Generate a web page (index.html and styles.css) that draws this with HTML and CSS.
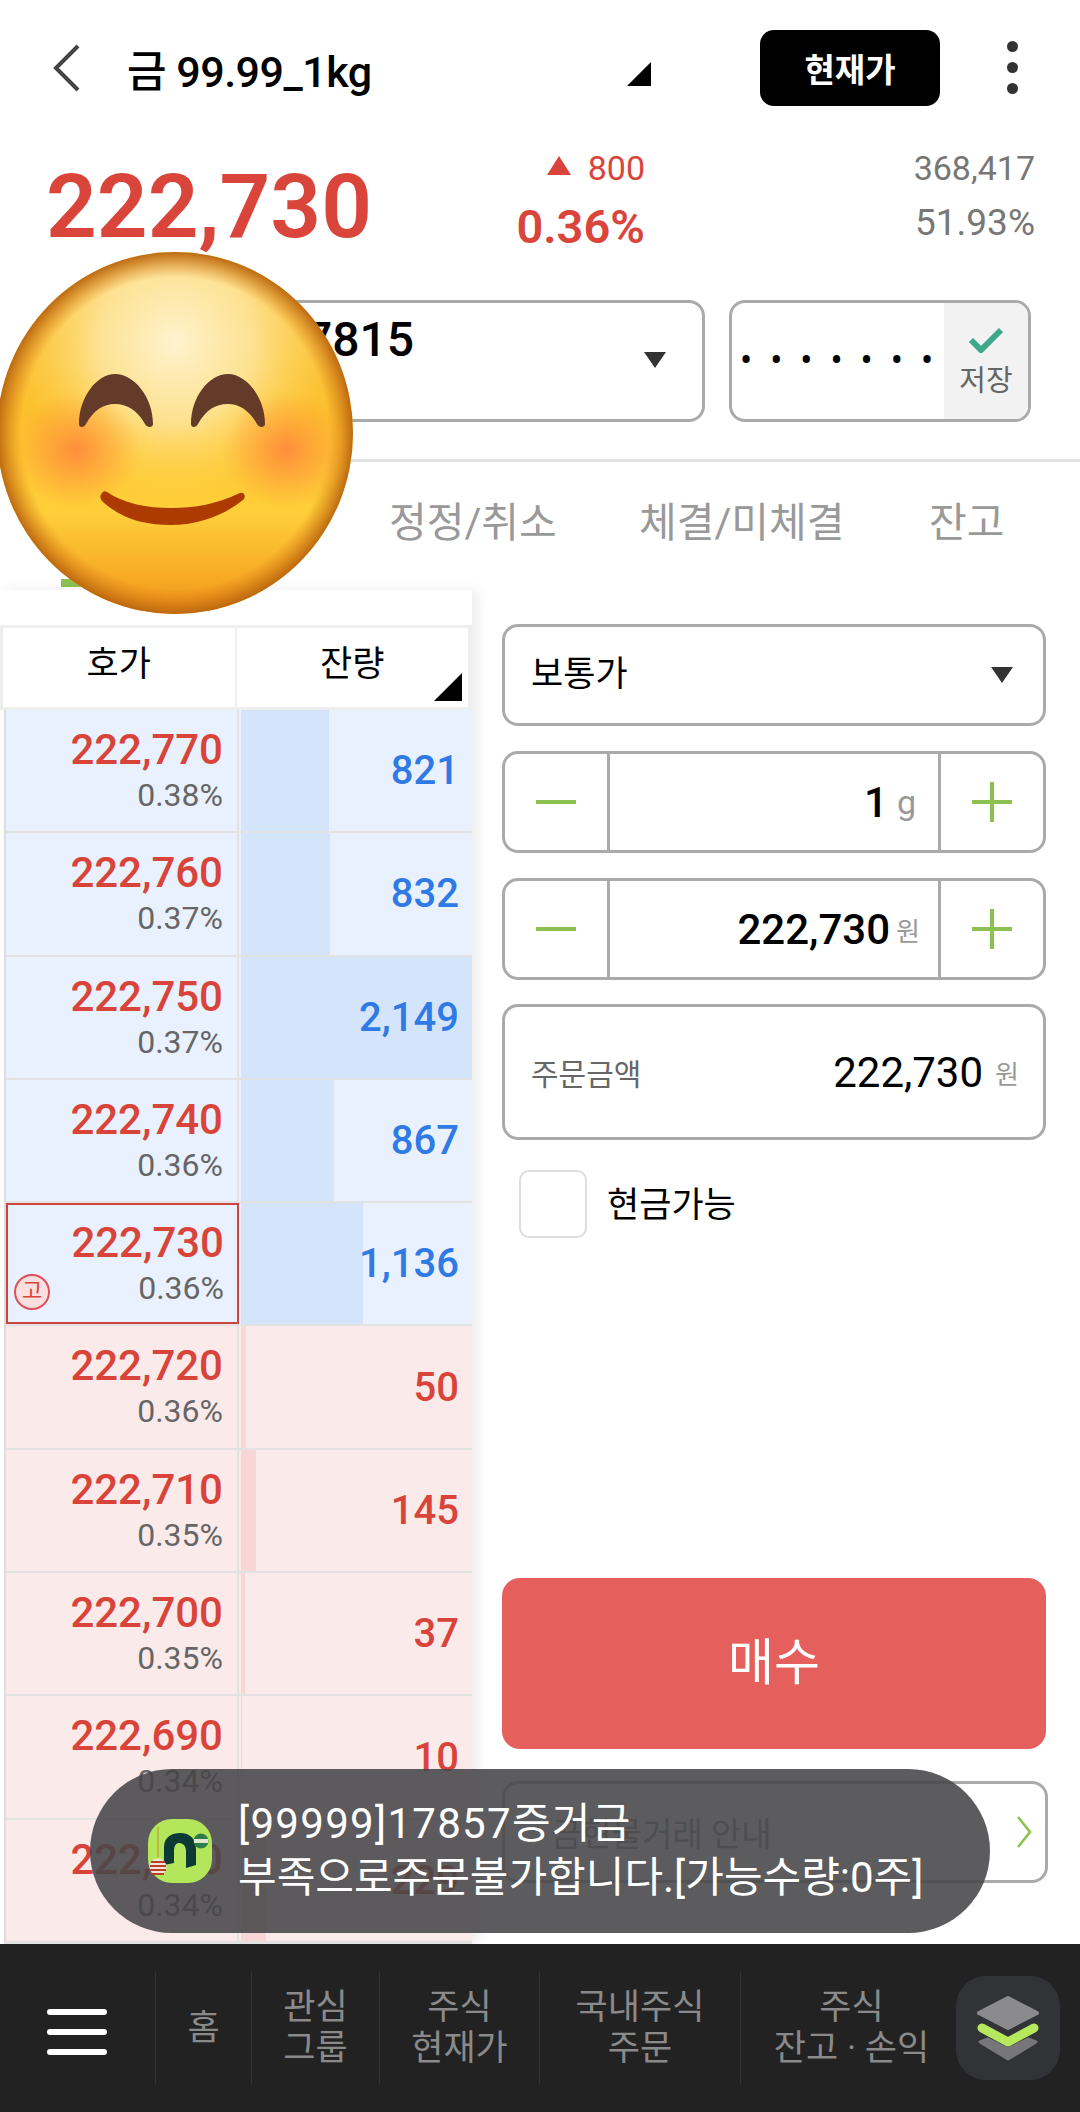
FILE: index.html
```html
<!DOCTYPE html>
<html lang="ko">
<head>
  <meta charset="UTF-8" />
  <meta name="viewport" content="width=device-width, initial-scale=1.0" />
  <title>금 99.99_1kg</title>
  <link rel="stylesheet" href="styles.css">
</head>
<body>
<div class="app">

  <div class="topbar">
    <svg class="back" width="30" height="48" viewBox="0 0 30 48"><path d="M28 2 L6 24 L28 46" fill="none" stroke="#444" stroke-width="4"/></svg>
    <div class="title">금 99.99_1kg</div>
    <div class="corner title-corner"></div>
    <button class="now-btn">현재가</button>
    <div class="more"><i></i><i></i><i></i></div>
  </div>

  <div class="price-row">
    <div class="price">222,730</div>
    <div class="change">
      <div class="change-abs"><span class="up"></span>800</div>
      <div class="change-pct">0.36%</div>
    </div>
    <div class="volume">
      <div>368,417</div>
      <div class="volume-pct">51.93%</div>
    </div>
  </div>

  <div class="account-row">
    <div class="account">
      <span class="account-no">7815</span>
      <span class="caret"></span>
    </div>
    <div class="password">
      <span class="pw-dots">•••••••</span>
      <div class="save">
        <svg width="36" height="26" viewBox="0 0 36 26"><path d="M3 13 L13 23 L33 3" fill="none" stroke="#3ea88a" stroke-width="6"/></svg>
        <span>저장</span>
      </div>
    </div>
  </div>

  <div class="tabs">
    <div class="tab active">주문</div>
    <div class="tab">정정/취소</div>
    <div class="tab">체결/미체결</div>
    <div class="tab">잔고</div>
  </div>

  <div class="trade">
    <div class="book">
      <div class="book-head">
        <div class="head-cell">호가</div>
        <div class="head-cell">잔량<div class="corner book-corner"></div></div>
      </div>
      <div class="rows">
        <div class="row sell">
          <div class="quote"><b>222,770</b><span>0.38%</span></div>
          <div class="qty"><div class="bar" style="width:38.2%"></div><b>821</b></div>
        </div>
        <div class="row sell">
          <div class="quote"><b>222,760</b><span>0.37%</span></div>
          <div class="qty"><div class="bar" style="width:38.7%"></div><b>832</b></div>
        </div>
        <div class="row sell">
          <div class="quote"><b>222,750</b><span>0.37%</span></div>
          <div class="qty"><div class="bar" style="width:100%"></div><b>2,149</b></div>
        </div>
        <div class="row sell">
          <div class="quote"><b>222,740</b><span>0.36%</span></div>
          <div class="qty"><div class="bar" style="width:40.3%"></div><b>867</b></div>
        </div>
        <div class="row sell">
          <div class="quote current"><b>222,730</b><span>0.36%</span><em class="high">고</em></div>
          <div class="qty"><div class="bar" style="width:52.9%"></div><b>1,136</b></div>
        </div>
        <div class="row buy">
          <div class="quote"><b>222,720</b><span>0.36%</span></div>
          <div class="qty"><div class="bar" style="width:2.3%"></div><b>50</b></div>
        </div>
        <div class="row buy">
          <div class="quote"><b>222,710</b><span>0.35%</span></div>
          <div class="qty"><div class="bar" style="width:6.7%"></div><b>145</b></div>
        </div>
        <div class="row buy">
          <div class="quote"><b>222,700</b><span>0.35%</span></div>
          <div class="qty"><div class="bar" style="width:1.7%"></div><b>37</b></div>
        </div>
        <div class="row buy">
          <div class="quote"><b>222,690</b><span>0.34%</span></div>
          <div class="qty"><div class="bar" style="width:0.5%"></div><b>10</b></div>
        </div>
        <div class="row buy">
          <div class="quote"><b>222,680</b><span>0.34%</span></div>
          <div class="qty"><div class="bar" style="width:10.7%"></div><b>229</b></div>
        </div>
      </div>
    </div>

    <div class="form">
      <div class="box order-type">
        <span>보통가</span>
        <span class="caret"></span>
      </div>
      <div class="box stepper">
        <div class="step"><i class="minus"></i></div>
        <div class="step-value"><b>1</b><span class="unit-g">g</span></div>
        <div class="step"><i class="minus"></i><i class="plus"></i></div>
      </div>
      <div class="box stepper">
        <div class="step"><i class="minus"></i></div>
        <div class="step-value"><b>222,730</b><span class="unit">원</span></div>
        <div class="step"><i class="minus"></i><i class="plus"></i></div>
      </div>
      <div class="box amount">
        <span class="amount-label">주문금액</span>
        <span class="amount-value">222,730</span>
        <span class="unit amount-unit">원</span>
      </div>
      <div class="check-row">
        <div class="check"></div>
        <span>현금가능</span>
      </div>
      <button class="buy-btn">매수</button>
      <div class="box info">
        <span>금현물거래 안내</span>
        <svg width="18" height="34" viewBox="0 0 18 34"><path d="M3 2 L15 17 L3 32" fill="none" stroke="#8cc152" stroke-width="2.6"/></svg>
      </div>
    </div>
  </div>

  <div class="nav">
    <div class="menu"><i></i><i></i><i></i></div>
    <div class="nav-item home">홈</div>
    <div class="nav-item group">관심<br>그룹</div>
    <div class="nav-item stock">주식<br>현재가</div>
    <div class="nav-item order">국내주식<br>주문</div>
    <div class="nav-item balance">주식<br>잔고 · 손익</div>
    <div class="layers">
      <svg width="104" height="104" viewBox="0 0 104 104">
        <path d="M52 22 L81 37 L52 52 L23 37 Z" fill="#8b8b8d" stroke="#8b8b8d" stroke-width="4" stroke-linejoin="round"/>
        <path d="M26 52 L52 66 L78 52" fill="none" stroke="#b5e85c" stroke-width="9" stroke-linecap="round" stroke-linejoin="round"/>
        <path d="M24 66 L32 63 L52 73 L72 63 L80 66 L52 83 Z" fill="#77777a" stroke="#77777a" stroke-width="3" stroke-linejoin="round"/>
      </svg>
    </div>
  </div>
</div>

<!-- toast and sticker sit over the page -->
<div class="toast">
  <svg class="toast-icon" width="64" height="64" viewBox="0 0 64 64">
    <rect x="0" y="0" width="64" height="64" rx="24" fill="#b4e65c"/>
    <path d="M16 46 L16 28 C16 18 24 14 32 14 C42 14 48 20 48 30 L48 46 L38 49 L38 32 C38 26 34 24 31 24 C28 24 26 27 26 32 L26 44 Z" fill="#0c3b35"/>
    <line x1="10" y1="8" x2="10" y2="38" stroke="#b98b2c" stroke-width="1"/>
    <circle cx="10" cy="48" r="8.5" fill="#f3e3d0"/>
    <path d="M3 43 H17 M2 47 H18 M2 51 H18 M4 55 H16" stroke="#b5402c" stroke-width="2"/>
    <circle cx="53" cy="22" r="7.5" fill="#2e7d46"/>
    <rect x="46" y="20" width="14" height="4" fill="#dfe8d0"/>
  </svg>
  <div class="toast-text"><span class="toast-first">[99999]17857증거금</span><br>부족으로주문불가합니다.[가능수량:0주]</div>
</div>

<svg class="emoji" width="356" height="362" viewBox="0 0 356 362">
  <defs>
    <linearGradient id="base" x1="0" y1="0" x2="0" y2="1">
      <stop offset="0" stop-color="#f8c860"/>
      <stop offset="0.45" stop-color="#fcc02c"/>
      <stop offset="0.72" stop-color="#ffcf3a"/>
      <stop offset="1" stop-color="#f2951a"/>
    </linearGradient>
    <radialGradient id="glow" cx="50%" cy="25%" r="44%">
      <stop offset="0" stop-color="#fff3cf"/>
      <stop offset="0.5" stop-color="#fee59a" stop-opacity="0.9"/>
      <stop offset="1" stop-color="#ffd84a" stop-opacity="0"/>
    </radialGradient>
    <radialGradient id="rim" cx="50%" cy="50%" r="50%">
      <stop offset="0.86" stop-color="#d87a12" stop-opacity="0"/>
      <stop offset="1" stop-color="#b9650f" stop-opacity="0.95"/>
    </radialGradient>
    <radialGradient id="cheek">
      <stop offset="0" stop-color="#ff8a3c" stop-opacity="0.95"/>
      <stop offset="1" stop-color="#ff9a3c" stop-opacity="0"/>
    </radialGradient>
  </defs>
  <ellipse cx="178" cy="181" rx="178" ry="181" fill="url(#base)"/>
  <ellipse cx="178" cy="181" rx="178" ry="181" fill="url(#glow)"/>
  <ellipse cx="178" cy="181" rx="178" ry="181" fill="url(#rim)"/>
  <ellipse cx="79" cy="198" rx="64" ry="58" fill="url(#cheek)"/>
  <ellipse cx="289" cy="198" rx="64" ry="58" fill="url(#cheek)"/>
  <path d="M82 172 C82 145 100 122 118 122 C137 122 156 145 156 172 C156 176 150 176 148 172 C140 158 130 152 118 152 C106 152 97 158 89 172 C87 176 82 176 82 172 Z" fill="#643a28"/>
  <path d="M194 172 C194 145 212 122 231 122 C249 122 268 145 268 172 C268 176 262 176 260 172 C252 158 242 152 231 152 C218 152 209 158 201 172 C199 176 194 176 194 172 Z" fill="#643a28"/>
  <path d="M106 240 C102 244 103 247 106 250 C126 268 150 273 174 273 C200 273 226 264 246 248 C249 245 248 240 243 241 C220 252 198 256 174 256 C150 256 128 252 110 240 C108 239 107 239 106 240 Z" fill="#ad3a00"/>
</svg>

</body>
</html>
```

FILE: styles.css
```css
* {
  box-sizing: border-box;
}

html, body {
  margin: 0;
  padding: 0;
}

body {
  width: 1080px;
  height: 2112px;
  position: relative;
  overflow: hidden;
  background: #fff;
  font-family: Roboto, "Noto Sans CJK KR", sans-serif;
  color: #000;
}

.app {
  height: 2112px;
  display: flex;
  flex-direction: column;
}

.corner {
  width: 0;
  height: 0;
  border-style: solid;
  border-width: 0 0 24px 24px;
  border-color: transparent transparent #000 transparent;
}

/* top bar */
.topbar {
  height: 135px;
  display: flex;
  align-items: center;
  padding-left: 50px;
}

.back {
  flex: none;
}

.title {
  margin-left: 47px;
  width: 500px;
  flex: none;
  font-size: 43px;
  font-weight: 500;
  letter-spacing: -0.5px;
}

.title-corner {
  flex: none;
  margin-top: 12px;
}

.now-btn {
  flex: none;
  margin-left: 109px;
  width: 180px;
  height: 76px;
  background: #000;
  color: #fff;
  border: none;
  border-radius: 14px;
  font-family: inherit;
  font-size: 33px;
  font-weight: 700;
}

.more {
  margin-left: 67px;
  display: flex;
  flex-direction: column;
  gap: 10px;
}

.more i {
  width: 11px;
  height: 11px;
  border-radius: 50%;
  background: #333;
}

/* price */
.price-row {
  height: 165px;
  display: flex;
  padding-left: 46px;
  padding-right: 45px;
}

.price {
  width: 321px;
  font-size: 89px;
  font-weight: 600;
  line-height: 100px;
  margin-top: 22px;
  color: #d9453b;
}

.change {
  width: 278px;
  text-align: right;
  color: #d9453b;
}

.change-abs {
  font-size: 34px;
  line-height: 40px;
  margin-top: 13px;
}

.up {
  display: inline-block;
  width: 0;
  height: 0;
  margin-right: 17px;
  margin-bottom: 5px;
  border-style: solid;
  border-width: 0 12px 19px 12px;
  border-color: transparent transparent #d9453b transparent;
}

.change-pct {
  font-size: 47px;
  font-weight: 600;
  line-height: 54px;
  margin-top: 12px;
}

.volume {
  flex: 1;
  text-align: right;
  color: #777;
  font-size: 34px;
  line-height: 40px;
  margin-top: 13px;
}

.volume-pct {
  margin-top: 15px;
  font-size: 37px;
}

/* account */
.account-row {
  height: 122px;
  display: flex;
  padding-left: 62px;
  gap: 24px;
}

.account, .password, .box {
  border: 3px solid #aaa;
  border-radius: 16px;
  background: #fff;
}

.account {
  width: 643px;
  display: flex;
  padding-left: 240px;
}

.account-no {
  font-size: 48px;
  font-weight: 500;
  line-height: 64px;
  margin-top: 5px;
}

.caret {
  width: 0;
  height: 0;
  border-style: solid;
  border-width: 16px 11px 0 11px;
  border-color: #333 transparent transparent transparent;
}

.account .caret {
  margin-left: auto;
  margin-right: 36px;
  margin-top: 49px;
}

.password {
  width: 302px;
  display: flex;
}

.pw-dots {
  width: 212px;
  flex: none;
  padding-left: 8px;
  font-size: 36px;
  line-height: 116px;
  letter-spacing: 18px;
  white-space: nowrap;
}

.save {
  flex: 1;
  background: #f2f2f2;
  border-radius: 0 13px 13px 0;
  display: flex;
  flex-direction: column;
  align-items: center;
  padding-top: 24px;
  font-size: 29px;
  color: #666;
}

.save span {
  line-height: 40px;
  margin-top: 8px;
}

/* tabs */
.tabs {
  margin-top: 37px;
  height: 131px;
  border-top: 3px solid #e2e2e2;
  display: flex;
  padding-left: 61px;
}

.tab {
  font-size: 41px;
  color: #999;
  line-height: 122px;
  white-space: nowrap;
}

.tab.active {
  width: 200px;
  color: #000;
  height: 125px;
  border-bottom: 8px solid #8cc152;
}

.tab:nth-child(2) {
  margin-left: 128px;
  width: 172px;
}

.tab:nth-child(3) {
  margin-left: 78px;
  width: 215px;
}

.tab:nth-child(4) {
  margin-left: 75px;
}

/* order book */
.trade {
  flex: 1;
  display: flex;
  min-height: 0;
}

.book {
  width: 472px;
  padding-top: 35px;
  box-shadow: 6px 0 12px rgba(0, 0, 0, 0.08);
  display: flex;
  flex-direction: column;
  background: #fff;
}

.book-head {
  height: 85px;
  display: flex;
  background: #eee;
  padding: 3px 4px 3px 3px;
  gap: 2px;
}

.head-cell {
  flex: 1;
  position: relative;
  background: #fff;
  font-size: 35px;
  text-align: center;
  line-height: 74px;
}

.book-corner {
  position: absolute;
  right: 6px;
  bottom: 6px;
  border-width: 0 0 28px 28px;
}

.rows {
  flex: 1;
  display: flex;
  flex-direction: column;
  margin-left: 4px;
  border-left: 2px solid #ddd;
  border-bottom: 3px solid #e2e2e2;
}

.row {
  flex: 1;
  display: flex;
  border-bottom: 2px solid #e2e2e2;
}

.row:last-child {
  border-bottom: none;
}

.sell {
  background: #e8f1fd;
}

.buy {
  background: #fbeaea;
}

.quote {
  width: 233px;
  padding-top: 15px;
  padding-right: 14px;
  display: flex;
  flex-direction: column;
  align-items: flex-end;
  border-right: 2px solid #e2e2e2;
  position: relative;
}

.quote b {
  font-size: 42px;
  font-weight: 500;
  line-height: 50px;
  color: #d9443a;
}

.quote span {
  font-size: 32px;
  line-height: 36px;
  margin-top: 2px;
  color: #666;
}

.quote.current {
  border: 2px solid #c9453d;
  padding-top: 13px;
  padding-right: 13px;
}

.high {
  position: absolute;
  left: 6px;
  bottom: 12px;
  width: 36px;
  height: 36px;
  border: 2px solid #e0505a;
  border-radius: 50%;
  background: #fce0e0;
  color: #d9443a;
  font-size: 22px;
  font-style: normal;
  line-height: 30px;
  text-align: center;
}

.qty {
  flex: 1;
  position: relative;
  display: flex;
  align-items: center;
  justify-content: flex-end;
  padding-right: 13px;
  margin-left: 2px;
}

.qty b {
  position: relative;
  font-size: 40px;
  font-weight: 500;
}

.sell .qty b {
  color: #2f7ae5;
}

.buy .qty b {
  color: #d9443a;
}

.bar {
  position: absolute;
  left: 0;
  top: 0;
  bottom: 0;
}

.sell .bar {
  background: #d4e5fb;
}

.buy .bar {
  background: #f8d6d6;
}

/* order form */
.form {
  flex: 1;
  display: flex;
  flex-direction: column;
  padding: 34px 34px 61px 30px;
}

.box {
  flex: none;
}

.order-type {
  height: 102px;
  display: flex;
  align-items: center;
  justify-content: space-between;
  padding: 0 30px 0 26px;
  font-size: 35px;
}

.order-type span:first-child {
  margin-bottom: 9px;
}

.stepper {
  height: 102px;
  margin-top: 25px;
  display: flex;
}

.step {
  width: 105px;
  position: relative;
}

.stepper .step:first-child {
  border-right: 3px solid #aaa;
}

.stepper .step:last-child {
  width: 105px;
  border-left: 3px solid #aaa;
}

.step i {
  position: absolute;
  background: #8cc152;
}

.minus {
  left: 50%;
  top: 50%;
  width: 40px;
  height: 4px;
  margin-left: -20px;
  margin-top: -2px;
}

.plus {
  left: 50%;
  top: 50%;
  width: 4px;
  height: 40px;
  margin-left: -2px;
  margin-top: -20px;
}

.step-value {
  flex: 1;
  display: flex;
  align-items: center;
  justify-content: flex-end;
  padding-right: 18px;
}

.step-value b {
  font-size: 42px;
  font-weight: 500;
}

.unit-g {
  font-size: 34px;
  color: #999;
  margin-left: 9px;
  margin-right: 4px;
}

.unit {
  font-size: 26px;
  color: #999;
  margin-left: 6px;
}

.amount {
  height: 136px;
  margin-top: 24px;
  display: flex;
  align-items: center;
  padding: 0 24px 0 26px;
}

.amount-label {
  font-size: 30px;
  color: #666;
}

.amount-value {
  margin-left: auto;
  font-size: 42px;
}

.amount-unit {
  margin-left: 12px;
}

.check-row {
  margin-top: 30px;
  padding-left: 17px;
  display: flex;
  align-items: center;
  gap: 20px;
  font-size: 35px;
}

.check-row span {
  margin-bottom: 6px;
}

.check {
  width: 68px;
  height: 68px;
  border: 2px solid #ddd;
  border-radius: 10px;
}

.buy-btn {
  margin-top: auto;
  height: 171px;
  padding-bottom: 12px;
  background: #e55f5c;
  color: #fff;
  border: none;
  border-radius: 18px;
  font-family: inherit;
  font-size: 50px;
}

.info {
  margin-top: 32px;
  margin-right: -2px;
  height: 102px;
  display: flex;
  align-items: center;
  justify-content: space-between;
  padding: 0 12px 0 46px;
  font-size: 33px;
  color: #888;
}

/* bottom nav */
.nav {
  height: 168px;
  flex: none;
  background: #222;
  display: flex;
  align-items: center;
  color: #8a8a8a;
}

.menu {
  width: 155px;
  padding-left: 47px;
  margin-top: 8px;
  display: flex;
  flex-direction: column;
  gap: 14px;
}

.menu i {
  width: 60px;
  height: 6px;
  border-radius: 3px;
  background: #fff;
}

.nav-item {
  height: 112px;
  border-left: 1px solid #333;
  font-size: 35px;
  line-height: 41px;
  text-align: center;
  display: flex;
  align-items: center;
  justify-content: center;
}

.home {
  width: 96px;
}

.group {
  width: 128px;
}

.stock {
  width: 160px;
}

.order {
  width: 201px;
}

.balance {
  width: 216px;
  padding-left: 6px;
  white-space: nowrap;
}

.layers {
  width: 104px;
  height: 104px;
  flex: none;
  border-radius: 30px;
  background: #323337;
}

/* overlays */
.toast {
  position: absolute;
  left: 90px;
  top: 1769px;
  width: 900px;
  height: 164px;
  border-radius: 82px;
  background: rgba(70, 70, 72, 0.88);
  display: flex;
  align-items: center;
  padding-left: 58px;
}

.toast-icon {
  flex: none;
}

.toast-text {
  margin-left: 26px;
  color: #fff;
  font-size: 42px;
  line-height: 54px;
  white-space: nowrap;
}

.toast-first {
  letter-spacing: 1.3px;
}

.emoji {
  position: absolute;
  left: -3px;
  top: 252px;
}
```
